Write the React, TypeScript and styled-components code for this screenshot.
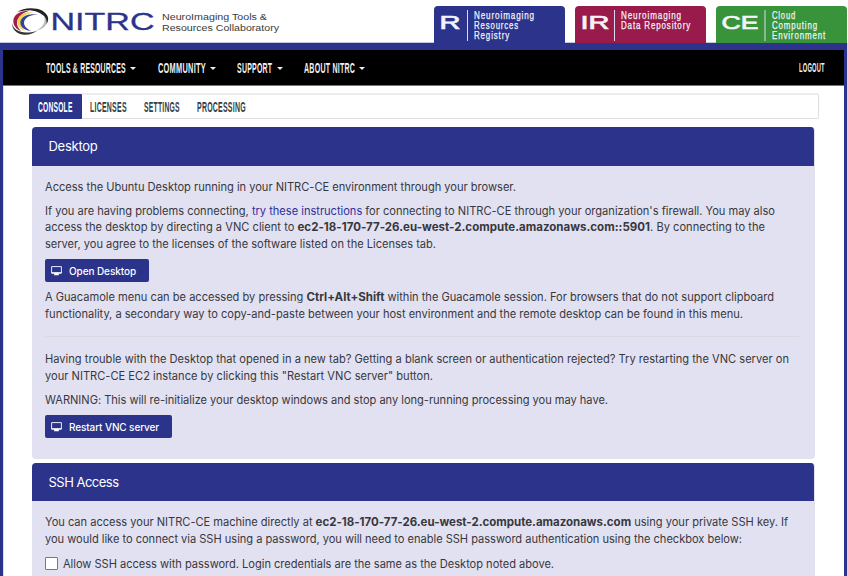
import React, { useLayoutEffect, useRef } from "react";
import styled, { createGlobalStyle } from "styled-components";

const blue = "#2b338b";

const GlobalStyle = createGlobalStyle`
  * { box-sizing: border-box; }
  html, body { margin: 0; background: #fff; }
  body { font-family: Inter, "Liberation Sans", sans-serif; color: #37383d; overflow: hidden; }
`;

const Page = styled.div`
  width: 848px;
  height: 576px;
  overflow: hidden;
  display: flex;
  flex-direction: column;
`;

const Masthead = styled.header`
  height: 43px;
  flex: none;
  display: flex;
  justify-content: space-between;
  padding-right: 1px;
`;

const LogoArt = styled.svg`
  display: block;
  width: 290px;
  height: 43px;
`;

const SiteTabs = styled.nav`
  display: flex;
  gap: 10px;
  padding-top: 6px;
`;

const SiteTab = styled.a<{ $color: string }>`
  position: relative;
  z-index: 1;
  width: 131px;
  height: 37px;
  border-radius: 4px 4px 0 0;
  background: ${(p) => p.$color};
`;

const TabArt = styled.svg`
  display: block;
  width: 131px;
  height: 37px;
`;

const Frame = styled.div`
  flex: 1;
  min-height: 0;
  margin-right: 1px;
  border: solid ${blue};
  border-width: 7px 3px 0 3px;
  box-shadow: inset 1px 0 #dcdcf0, 1px 0 #d5d5ef, 0 -1px #c5c7df;
`;

const MainNav = styled.nav`
  height: 36px;
  background: #000;
  border-bottom: 1px solid #77777a;
  display: flex;
  align-items: center;
  padding: 1px 19px 0 43px;
`;

const NavItem = styled.a<{ $gap: number }>`
  display: flex;
  align-items: center;
  gap: 4px;
  margin-right: ${(p) => p.$gap}px;
  color: #f1f1f1;
`;

const Caret = styled.i`
  border: solid transparent;
  border-width: 3px 3px 0;
  border-top-color: #eee;
`;

const Spacer = styled.div`
  flex: 1;
`;

const Condensed = styled.span<{ $width: number; $size: number }>`
  display: block;
  width: ${(p) => p.$width}px;
  height: 16px;
  font: 700 ${(p) => p.$size}px/16px "Liberation Sans", Arial, sans-serif;
  letter-spacing: 0.5px;
  white-space: nowrap;

  span {
    display: inline-block;
    transform-origin: 0 50%;
  }
`;

const Content = styled.main`
  padding: 7px 25px 0 26px;
`;

const SubNav = styled.nav`
  height: 26px;
  display: flex;
  border: 1px solid #dedede;
  border-top: 2px solid #ececec;
  border-radius: 2px;
  margin-bottom: 8px;
`;

const SubTab = styled.a<{ $active?: boolean }>`
  display: flex;
  align-items: center;
  height: 25px;
  margin: -1px 0 0 -1px;
  padding: 0 ${(p) => (p.$active ? 9 : 8.6)}px 0 ${(p) => (p.$active ? 9 : 9.4)}px;
  color: ${(p) => (p.$active ? "#fff" : "#333e46")};
  background: ${(p) => (p.$active ? blue : "transparent")};
  border-radius: 1px;
`;

const Card = styled.section<{ $height: number }>`
  height: ${(p) => p.$height}px;
  margin: 0 4px 4px 3px;
  background: #e2e1f2;
  border: 1px solid #e0e0ef;
  border-width: 0 1px 1px 0;
  border-radius: 4px;
  overflow: hidden;
`;

const CardTitle = styled.h2`
  height: 38.5px;
  margin: 0;
  padding: 0 16.5px;
  background: ${blue};
  color: #fff;
  font-size: 13px;
  font-weight: 400;
  line-height: 39px;
`;

const CardBody = styled.div`
  padding: 13.4px 13px 0;
`;

const Paragraph = styled.p`
  margin: 0 0 7.2px;
`;

const Line = styled.span`
  display: block;
  width: max-content;
  height: 16.5px;
  font-size: 11.1px;
  line-height: 16.5px;
  white-space: nowrap;

  b { font-size: 11.5px; font-weight: 700; }
`;

const Link = styled.a`
  color: #2d309b;
`;

const Divider = styled.hr`
  height: 1px;
  border: 0;
  margin: 13.7px 2px 14.3px 0;
  background: #dadae4;
`;

const Button = styled.button<{ $width: number }>`
  display: flex;
  align-items: center;
  gap: 7px;
  width: ${(p) => p.$width}px;
  height: 22.8px;
  margin: 0 0 7.4px;
  padding: 0 6px;
  border: 0;
  border-radius: 2px;
  background: ${blue};
  color: #fff;
  font: 500 10px/22px Inter, sans-serif;
`;

const CheckRow = styled.label`
  display: flex;
  align-items: center;
  gap: 5px;
  margin-top: 8.3px;
`;

const Checkbox = styled.input`
  appearance: none;
  width: 13px;
  height: 13px;
  margin: 0;
  border: 1px solid #77777c;
  border-radius: 1px;
  background: #fff;
`;

/* Squeezes a heavy sans into the narrow poster style used by the menus. */
function Narrow({ text, width, size = 14.5 }: { text: string; width: number; size?: number }) {
  const ref = useRef<HTMLSpanElement>(null);
  useLayoutEffect(() => {
    const el = ref.current;
    if (el) el.style.transform = `scaleX(${width / el.offsetWidth})`;
  }, [text, width]);
  return (
    <Condensed $width={width} $size={size}>
      <span ref={ref}>{text}</span>
    </Condensed>
  );
}

/* Tracks a single line of copy to a fixed measure. */
function Measure({ width, children }: { width: number; children: React.ReactNode }) {
  const ref = useRef<HTMLSpanElement>(null);
  useLayoutEffect(() => {
    const el = ref.current;
    if (!el) return;
    el.style.letterSpacing = "0px";
    const natural = el.getBoundingClientRect().width;
    el.style.letterSpacing = `${(width - natural) / (el.textContent || " ").length}px`;
  }, [width]);
  return <Line ref={ref}>{children}</Line>;
}

function Label({ width, text }: { width: number; text: string }) {
  const ref = useRef<HTMLSpanElement>(null);
  useLayoutEffect(() => {
    const el = ref.current;
    if (!el) return;
    el.style.letterSpacing = "0px";
    el.style.letterSpacing = `${(width - el.getBoundingClientRect().width) / text.length}px`;
  }, [width, text]);
  return <span ref={ref}>{text}</span>;
}

const Monitor = () => (
  <svg width="11" height="10" viewBox="0 0 11 10">
    <path d="M.6.6h9.8v6.5H.6z" fill="none" stroke="#e9e9fa" strokeWidth="1" />
    <path d="M.6 6.2h9.8v1.3H7.4l.7 1.8H2.9l.7-1.8H.6z" fill="#fff" />
  </svg>
);

const Logo = () => (
  <LogoArt viewBox="0 0 290 43">
    <path d="M17 12.500C23 7 36 7.500 42 10.500C48 14 50 19 46.500 24C47 18 44 15 38 12.300C30 9 22 10.300 17 12.500Z" fill="#222" />
    <path d="M12 23C13 29 19 32.500 26 32.500C31 32.500 35 32 38 30C34 33.500 29 35 24 34.700C16 34 12 29 12 23Z" fill="#333" />
    <path d="M44 17C46 22 43 27 37 30C45 29 49 23 46 18Z" fill="#777" opacity=".5" />
    <path d="M30 10.500C21 10.500 15 14 13.500 19C12.500 25 16 29 21 31C17 27 16 23 18 19C20 15 24 12 30 10.500Z" fill="#a51c4b" />
    <path d="M34 12C25 11.500 19 15 17.500 20C16.500 25 20 29 25 31C21 27 20 23 21.500 19.500C24 15 29 13 34 12Z" fill="#f1d64b" />
    <path d="M38 15C29 12.500 22 16 20.500 21C19.500 26 23 30 31 31C25 28 23 24 24.500 20.500C27 16 32 14.500 38 15Z" fill="#39429a" />
    <g fill={blue} stroke={blue} strokeWidth=".3" fontFamily="Liberation Sans, sans-serif" fontSize="23.800">
      <text x="50.500" y="29.700" textLength="104" lengthAdjust="spacingAndGlyphs">NITRC</text>
    </g>
    <g fill="#3a3a3a" fontFamily="Liberation Sans, sans-serif" fontSize="9.700">
      <text x="162" y="20.300" textLength="105" lengthAdjust="spacingAndGlyphs">NeuroImaging Tools &amp;</text>
      <text x="162" y="30.800" textLength="117" lengthAdjust="spacingAndGlyphs">Resources Collaboratory</text>
    </g>
  </LogoArt>
);

/* A narrow caption: letters are squeezed, with open tracking between them. */
const Caption = ({ x, y, text, width }: { x: number; y: number; text: string; width: number }) => (
  <text x={x} y={y} fontSize="11" stroke="#f5f3fa" strokeWidth=".25" letterSpacing="1.2" textLength={width} lengthAdjust="spacingAndGlyphs">{text}</text>
);

type Site = { mark: string; color: string; markWidth: number; ruleX: number; textX: number; lines: [string, number][] };

const sites: Site[] = [
  { mark: "R", color: blue, markWidth: 21, ruleX: 33.5, textX: 40, lines: [["Neuroimaging", 61], ["Resources", 45], ["Registry", 36]] },
  { mark: "IR", color: "#981b4b", markWidth: 29, ruleX: 39.5, textX: 46, lines: [["Neuroimaging", 61], ["Data Repository", 70]] },
  { mark: "CE", color: "#38933a", markWidth: 37, ruleX: 49, textX: 56, lines: [["Cloud", 24], ["Computing", 46], ["Environment", 54]] },
];

export default function App() {
  return (
    <Page>
      <GlobalStyle />
      <Masthead>
        <Logo />
        <SiteTabs>
          {sites.map((s) => (
            <SiteTab key={s.mark} $color={s.color}>
              <TabArt viewBox="0 0 131 37">
                <g fill="#f5f3fa" fontFamily="Liberation Sans, sans-serif">
                  <text x="5.5" y="22.8" fontSize="18.5" stroke="#f5f3fa" strokeWidth=".7" textLength={s.markWidth} lengthAdjust="spacingAndGlyphs">{s.mark}</text>
                  <path d={`M${s.ruleX} 4v31`} stroke="#dcdaf0" />
                  {s.lines.map(([t, w], i) => (
                    <Caption key={t} x={s.textX} y={13.2 + i * 10} text={t} width={w} />
                  ))}
                </g>
              </TabArt>
            </SiteTab>
          ))}
        </SiteTabs>
      </Masthead>
      <Frame>
        <MainNav>
          <NavItem $gap={22}><Narrow text="TOOLS & RESOURCES" width={80} /><Caret /></NavItem>
          <NavItem $gap={21.4}><Narrow text="COMMUNITY" width={48} /><Caret /></NavItem>
          <NavItem $gap={21.6}><Narrow text="SUPPORT" width={35.5} /><Caret /></NavItem>
          <NavItem $gap={0}><Narrow text="ABOUT NITRC" width={51} /><Caret /></NavItem>
          <Spacer />
          <NavItem $gap={0}><Narrow text="LOGOUT" width={26} size={13} /></NavItem>
        </MainNav>
        <Content>
          <SubNav>
            <SubTab $active><Narrow text="CONSOLE" width={34.5} /></SubTab>
            <SubTab><Narrow text="LICENSES" width={37} /></SubTab>
            <SubTab><Narrow text="SETTINGS" width={36} /></SubTab>
            <SubTab><Narrow text="PROCESSING" width={49} /></SubTab>
          </SubNav>
          <Card $height={331.5}>
            <CardTitle><Label text="Desktop" width={49} /></CardTitle>
            <CardBody>
              <Paragraph><Measure width={471}>Access the Ubuntu Desktop running in your NITRC-CE environment through your browser.</Measure></Paragraph>
              <Paragraph>
                <Measure width={730}>If you are having problems connecting, <Link>try these instructions</Link> for connecting to NITRC-CE through your organization's firewall. You may also</Measure>
                <Measure width={720}>access the desktop by directing a VNC client to <b>ec2-18-170-77-26.eu-west-2.compute.amazonaws.com::5901</b>. By connecting to the</Measure>
                <Measure width={391}>server, you agree to the licenses of the software listed on the Licenses tab.</Measure>
              </Paragraph>
              <Button $width={104}><Monitor /><Label text="Open Desktop" width={67} /></Button>
              <Paragraph>
                <Measure width={729}>A Guacamole menu can be accessed by pressing <b>Ctrl+Alt+Shift</b> within the Guacamole session. For browsers that do not support clipboard</Measure>
                <Measure width={698}>functionality, a secondary way to copy-and-paste between your host environment and the remote desktop can be found in this menu.</Measure>
              </Paragraph>
              <Divider />
              <Paragraph>
                <Measure width={744}>Having trouble with the Desktop that opened in a new tab? Getting a blank screen or authentication rejected? Try restarting the VNC server on</Measure>
                <Measure width={388}>your NITRC-CE EC2 instance by clicking this "Restart VNC server" button.</Measure>
              </Paragraph>
              <Paragraph><Measure width={563}>WARNING: This will re-initialize your desktop windows and stop any long-running processing you may have.</Measure></Paragraph>
              <Button $width={127}><Monitor /><Label text="Restart VNC server" width={90} /></Button>
            </CardBody>
          </Card>
          <Card $height={140}>
            <CardTitle><Label text="SSH Access" width={70} /></CardTitle>
            <CardBody>
              <Paragraph>
                <Measure width={743}>You can access your NITRC-CE machine directly at <b>ec2-18-170-77-26.eu-west-2.compute.amazonaws.com</b> using your private SSH key. If</Measure>
                <Measure width={697}>you would like to connect via SSH using a password, you will need to enable SSH password authentication using the checkbox below:</Measure>
              </Paragraph>
              <CheckRow>
                <Checkbox type="checkbox" />
                <Measure width={491}>Allow SSH access with password. Login credentials are the same as the Desktop noted above.</Measure>
              </CheckRow>
            </CardBody>
          </Card>
        </Content>
      </Frame>
    </Page>
  );
}
